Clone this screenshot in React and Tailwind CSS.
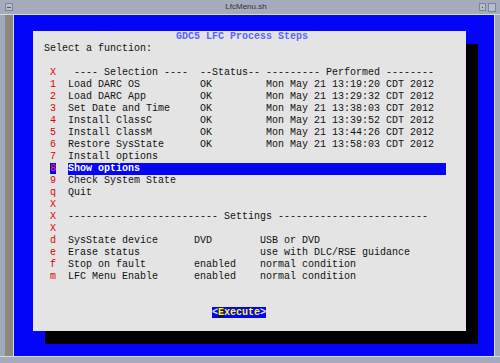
import React from 'react'

const pad = (s, n) => s.padEnd(n, ' ')

const steps = [
  ['1', 'Load DARC OS', 'OK', 'Mon May 21 13:19:20 CDT 2012'],
  ['2', 'Load DARC App', 'OK', 'Mon May 21 13:29:32 CDT 2012'],
  ['3', 'Set Date and Time', 'OK', 'Mon May 21 13:38:03 CDT 2012'],
  ['4', 'Install ClassC', 'OK', 'Mon May 21 13:39:52 CDT 2012'],
  ['5', 'Install ClassM', 'OK', 'Mon May 21 13:44:26 CDT 2012'],
  ['6', 'Restore SysState', 'OK', 'Mon May 21 13:58:03 CDT 2012'],
  ['7', 'Install options', '', '']
]

const settings = [
  ['d', 'SysState device', 'DVD', 'USB or DVD'],
  ['e', 'Erase status', '', 'use with DLC/RSE guidance'],
  ['f', 'Stop on fault', 'enabled', 'normal condition'],
  ['m', 'LFC Menu Enable', 'enabled', 'normal condition']
]

function Line({ k, children, keyClass = 'text-[#e00000]' }) {
  return (
    <div className="h-3 leading-3 whitespace-pre">
      {' '}
      <span className={keyClass}>{k || ' '}</span>
      {'  '}
      {children}
    </div>
  )
}

export default function App() {
  return (
    <div className="w-[500px] h-[363px] flex flex-col bg-[#a3abbd] overflow-hidden">
      {/* title bar */}
      <div className="h-[14px] flex items-center relative">
        <div className="ml-[5px] w-[8px] h-[8px] border border-[#7c8496] bg-[#b4bccd] flex items-center justify-center">
          <div className="w-[4px] h-px bg-[#555]" />
        </div>
        <div className="flex-1 text-center text-[8px] leading-[14px] text-[#333] font-['Liberation_Sans',sans-serif]">
          LfcMenu.sh
        </div>
        <div className="w-[7px] h-[8px] border border-[#7c8496] bg-[#b4bccd] flex items-center justify-center mr-[2px]">
          <div className="w-px h-px bg-[#444]" />
        </div>
        <div className="w-[8px] h-[9px] border border-[#7c8496] bg-[#b4bccd] mr-[4px]" />
      </div>
      <div className="h-px bg-[#d6dae3]" />

      <div className="flex flex-1">
        <div className="w-[5px] bg-[#a0a8ba]" />
        <div className="w-[8px] bg-[#8c897f]" />
        <div className="w-px bg-[#d6dae3]" />

        {/* terminal */}
        <div className="flex-1 bg-[#0404fa] pl-[19px] pt-[16px]">
          <div className="w-[433px] h-[300px] bg-[#e4e4e4] shadow-[12px_13px_0_0_#000] pl-[11px] font-['Liberation_Mono',monospace] text-[10px] text-[#111]">
            <div className="h-3 leading-3 whitespace-pre">
              {pad('', 22)}
              <span className="text-[#5a62ff] font-bold">GDC5 LFC Process Steps</span>
            </div>
            <div className="h-3 leading-3">Select a function:</div>
            <div className="h-3" />
            <Line k="X">{' ---- Selection ----  --Status-- --------- Performed --------'}</Line>
            {steps.map(([k, name, st, date]) => (
              <Line key={k} k={k}>
                {pad(name, 22) + pad(st, 11) + date}
              </Line>
            ))}
            <div className="h-3 leading-3 whitespace-pre">
              {' '}
              <span className="bg-[#0404fa] text-[#ff3030]">8</span>
              {'  '}
              <span className="inline-block w-[378px] h-3 bg-[#0404fa] text-white font-bold">Show options</span>
            </div>
            <Line k="9">Check System State</Line>
            <Line k="q">Quit</Line>
            <Line k="X" />
            <Line k="X">{'-'.repeat(25) + ' Settings ' + '-'.repeat(25)}</Line>
            <Line k="X" />
            {settings.map(([k, name, val, note]) => (
              <Line key={k} k={k}>
                {pad(name, 21) + pad(val, 11) + note}
              </Line>
            ))}
            <div className="h-3" />
            <div className="h-3" />
            <div className="h-3 leading-3 whitespace-pre">
              {pad('', 28)}
              <span className="bg-[#0404fa] font-bold">
                <span className="text-[#e8e8ff]">{'<'}</span>
                <span className="bg-[#10105a] text-[#ffff00]">E</span>
                <span className="text-[#ffff00]">xecute</span>
                <span className="text-[#e8e8ff]">{'>'}</span>
              </span>
            </div>
          </div>
        </div>

        <div className="w-px bg-[#d6dae3]" />
        <div className="w-[5px] bg-[#a0a8ba]" />
      </div>
      <div className="h-px bg-[#d6dae3]" />
      <div className="h-[6px]" />
    </div>
  )
}
